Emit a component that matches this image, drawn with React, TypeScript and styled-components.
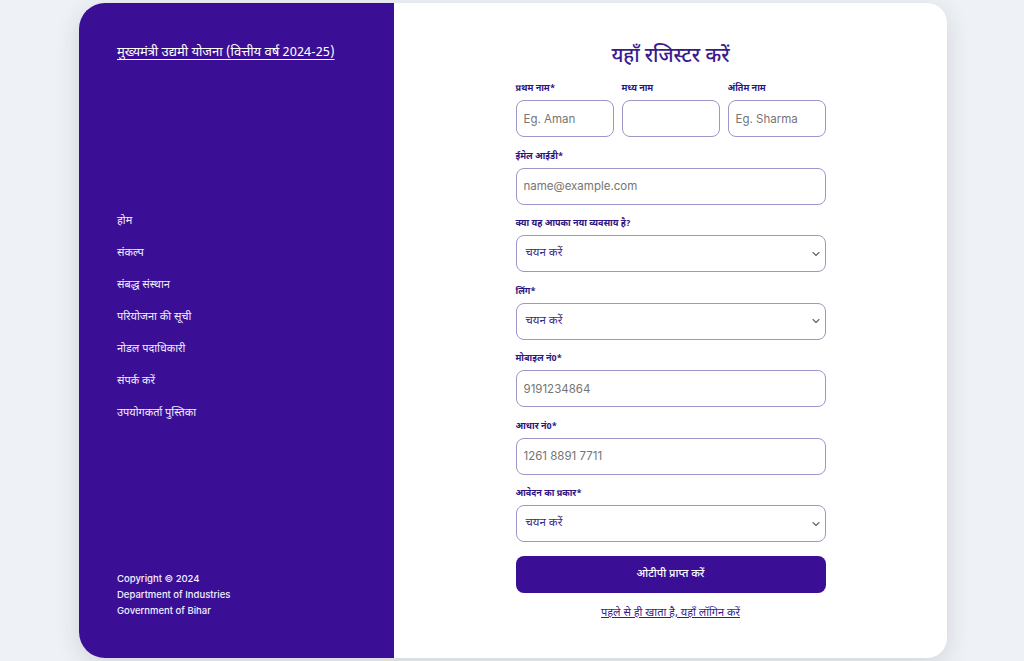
import React, { FC } from 'react';
import styled, { createGlobalStyle } from 'styled-components';

const GlobalStyle = createGlobalStyle`
  html, body {
    margin: 0;
    padding: 0;
    background: #eef1f5;
    font-family: 'Noto Sans Devanagari', 'Lohit Devanagari', 'Noto Sans', sans-serif;
  }
  * { box-sizing: border-box; }
`;

const Page = styled.div`
  width: 100%;
  height: 661px;
  padding: 3px 0 0 2px;
  overflow: hidden;
`;

const Card = styled.div`
  width: 868px;
  height: 655px;
  margin: 0 auto;
  display: flex;
  border-radius: 26px 20px 20px 26px;
  background: #ffffff;
  box-shadow: 0 6px 24px rgba(40, 40, 60, 0.14);
  overflow: hidden;
`;

const Sidebar = styled.aside`
  width: 315px;
  flex-shrink: 0;
  background: #3a0f96;
  color: #ffffff;
  padding: 40px 38px 39px;
  display: flex;
  flex-direction: column;
  justify-content: space-between;
`;

const Brand = styled.a`
  color: #ffffff;
  font-size: 13px;
  text-decoration: underline;
  text-underline-offset: 3px;
  line-height: 20px;
`;

const Nav = styled.ul`
  list-style: none;
  margin: 0;
  padding: 0;
  display: flex;
  flex-direction: column;
  gap: 15px;
`;

const NavItem = styled.li`
  font-size: 11px;
  line-height: 17px;
  color: #f1ecff;
`;

const Footer = styled.div`
  font-family: 'Inter', 'Open Sans', sans-serif;
  font-size: 9.5px;
  font-weight: 500;
  line-height: 16px;
  color: #f3f0ff;
`;

const Main = styled.main`
  flex: 1;
  display: flex;
  justify-content: center;
  padding-top: 40px;
`;

const Form = styled.form`
  width: 310px;
  display: flex;
  flex-direction: column;
`;

const Title = styled.h1`
  margin: 0 0 12px;
  text-align: center;
  font-size: 20px;
  font-weight: 500;
  line-height: 28px;
  color: #3a1a8c;
`;

const NameRow = styled.div`
  display: grid;
  grid-template-columns: repeat(3, 1fr);
  gap: 8px;
`;

const Field = styled.div`
  display: flex;
  flex-direction: column;
  margin-bottom: 13.5px;
`;

const Label = styled.label`
  font-size: 9px;
  font-weight: 700;
  line-height: 12px;
  color: #2e1580;
  margin-bottom: 5px;
`;

const Input = styled.input`
  width: 100%;
  height: 37px;
  border: 1px solid #9d96c8;
  border-radius: 8px;
  padding: 0 7px;
  font-family: 'Inter', 'Open Sans', sans-serif;
  font-size: 11.5px;
  color: #333;
  background: #fff;
  outline: none;

  ::placeholder {
    color: #858585;
  }
`;

const SelectBox = styled.div`
  height: 37px;
  border: 1px solid #9d96c8;
  border-radius: 8px;
  padding: 0 4px 0 9px;
  display: flex;
  align-items: center;
  justify-content: space-between;
  font-size: 11.5px;
  color: #3d2a82;
`;

const Submit = styled.button`
  height: 37px;
  border: none;
  border-radius: 8px;
  background: #3a0f96;
  color: #ffffff;
  font-family: inherit;
  font-size: 11px;
  font-weight: 500;
`;

const LoginLink = styled.a`
  margin-top: 13px;
  text-align: center;
  font-size: 11px;
  color: #3a1a8c;
  text-decoration: underline;
`;

const Chevron: FC = () => (
  <svg width="10" height="10" viewBox="0 0 10 10" fill="none">
    <path d="M2 3.5 L5 6.5 L8 3.5" stroke="#666" strokeWidth="1.1" strokeLinecap="round" strokeLinejoin="round" />
  </svg>
);

const Select: FC<{ label: string }> = ({ label }) => (
  <Field>
    <Label>{label}</Label>
    <SelectBox>
      <span>चयन करें</span>
      <Chevron />
    </SelectBox>
  </Field>
);

const navItems = [
  'होम',
  'संकल्प',
  'संबद्ध संस्थान',
  'परियोजना की सूची',
  'नोडल पदाधिकारी',
  'संपर्क करें',
  'उपयोगकर्ता पुस्तिका',
];

const App: FC = () => (
  <Page>
    <GlobalStyle />
    <Card>
      <Sidebar>
        <Brand>मुख्यमंत्री उद्यमी योजना (वित्तीय वर्ष 2024-25)</Brand>
        <Nav>
          {navItems.map((item) => (
            <NavItem key={item}>{item}</NavItem>
          ))}
        </Nav>
        <Footer>
          Copyright © 2024
          <br />
          Department of Industries
          <br />
          Government of Bihar
        </Footer>
      </Sidebar>
      <Main>
        <Form onSubmit={(e) => e.preventDefault()}>
          <Title>यहाँ रजिस्टर करें</Title>
          <NameRow>
            <Field>
              <Label>प्रथम नाम*</Label>
              <Input placeholder="Eg. Aman" />
            </Field>
            <Field>
              <Label>मध्य नाम</Label>
              <Input />
            </Field>
            <Field>
              <Label>अंतिम नाम</Label>
              <Input placeholder="Eg. Sharma" />
            </Field>
          </NameRow>
          <Field>
            <Label>ईमेल आईडी*</Label>
            <Input placeholder="name@example.com" />
          </Field>
          <Select label="क्या यह आपका नया व्यवसाय है?" />
          <Select label="लिंग*" />
          <Field>
            <Label>मोबाइल नं0*</Label>
            <Input placeholder="9191234864" />
          </Field>
          <Field>
            <Label>आधार नं0*</Label>
            <Input placeholder="1261 8891 7711" />
          </Field>
          <Select label="आवेदन का प्रकार*" />
          <Submit type="submit">ओटीपी प्राप्त करें</Submit>
          <LoginLink>पहले से ही खाता है, यहाँ लॉगिन करें</LoginLink>
        </Form>
      </Main>
    </Card>
  </Page>
);

export default App;
